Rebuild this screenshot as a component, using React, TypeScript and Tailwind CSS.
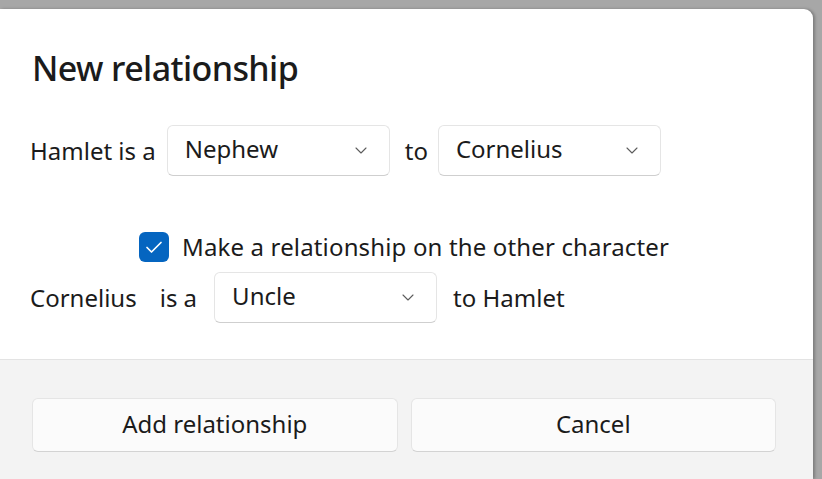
const font = { fontFamily: '"Noto Sans", "Open Sans", sans-serif' };

function Chevron() {
  return (
    <svg width="12" height="7" viewBox="0 0 12 7" fill="none">
      <path d="M1 1 L6 6 L11 1" stroke="#5c5c5c" strokeWidth="1.1" strokeLinecap="round" strokeLinejoin="round" />
    </svg>
  );
}

function Combo({ value }: { value: string }) {
  return (
    <div className="h-[51px] w-[223px] shrink-0 flex items-center justify-between pl-[17px] pr-[22px] bg-white border border-[#e5e5e5] border-b-[#cfcfcf] rounded-[6px]">
      <span className="text-[24px] text-[#1b1b1b] leading-none pb-[3px]">{value}</span>
      <Chevron />
    </div>
  );
}

function Button({ label }: { label: string }) {
  return (
    <div className="flex-1 h-[54px] flex items-center justify-center bg-[#fbfbfb] border border-[#e5e5e5] border-b-[#d3d3d3] rounded-[6px]">
      <span className="text-[24px] text-[#1b1b1b] leading-none pb-[2px]">{label}</span>
    </div>
  );
}

export default function App() {
  return (
    <div className="w-[822px] h-[479px] bg-[#a7a7a7] pt-[9px] overflow-hidden" style={font}>
      <div className="w-[813px] h-[470px] flex flex-col bg-white rounded-tr-[9px] shadow-[2px_0_3px_rgba(0,0,0,0.25)] overflow-hidden">
        <div className="pl-[30px] pt-[39px] pb-[36px] border-b border-[#e3e3e3]">
          <h1 className="text-[34px] font-medium leading-[40px] text-[#1b1b1b] pl-[2px] tracking-[-0.6px]">New relationship</h1>

          <div className="mt-[37px] flex items-center text-[24px] text-[#1b1b1b]">
            <span className="mr-[11px]">Hamlet is a</span>
            <Combo value="Nephew" />
            <span className="ml-[15px] mr-[10px]">to</span>
            <Combo value="Cornelius" />
          </div>

          <div className="mt-[56px] flex items-center pl-[109px] h-[30px]">
            <div className="w-[30px] h-[30px] rounded-[6px] bg-[#0565c0] flex items-center justify-center">
              <svg width="18" height="14" viewBox="0 0 18 14" fill="none">
                <path d="M2 7.5 L6.5 12 L16 2.5" stroke="white" strokeWidth="1.7" strokeLinecap="round" strokeLinejoin="round" />
              </svg>
            </div>
            <span className="text-[24px] leading-[30px] text-[#1b1b1b] ml-[13px] tracking-[0.15px]">Make a relationship on the other character</span>
          </div>

          <div className="mt-[10px] flex items-center text-[24px] text-[#1b1b1b]">
            <span>Cornelius</span>
            <span className="ml-[23px] mr-[17px]">is a</span>
            <Combo value="Uncle" />
            <span className="ml-[16px]">to Hamlet</span>
          </div>
        </div>

        <div className="flex-1 bg-[#f3f3f3] pl-[32px] pr-[37px] pt-[38px] flex gap-[13px] items-start">
          <Button label="Add relationship" />
          <Button label="Cancel" />
        </div>
      </div>
    </div>
  );
}
